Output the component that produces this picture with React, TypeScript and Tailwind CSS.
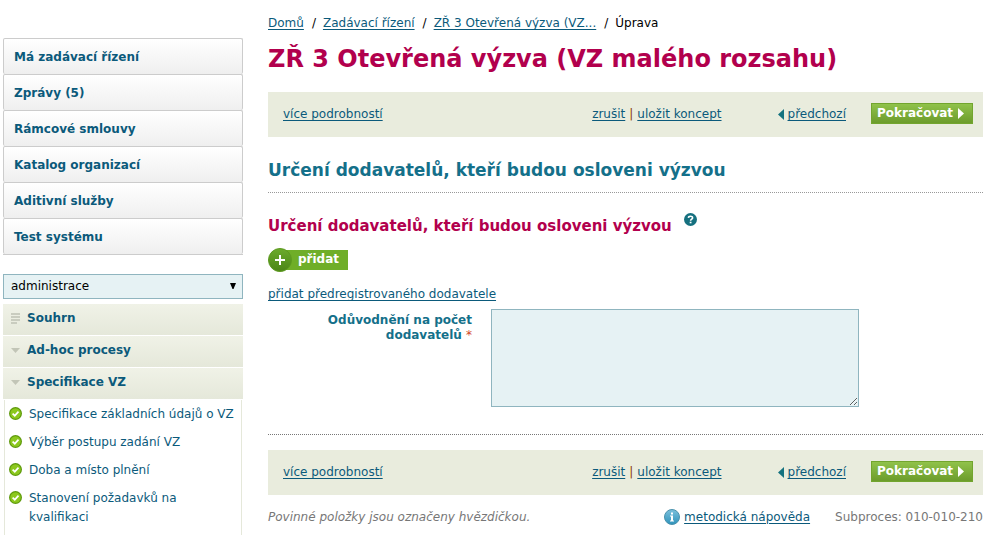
import type { ReactNode } from 'react';

interface LinkProps {
  children: ReactNode;
}

const MAIN_MENU = [
  'Má zadávací řízení',
  'Zprávy (5)',
  'Rámcové smlouvy',
  'Katalog organizací',
  'Aditivní služby',
  'Test systému',
];

const STEPS = [
  'Specifikace základních údajů o VZ',
  'Výběr postupu zadání VZ',
  'Doba a místo plnění',
  'Stanovení požadavků na kvalifikaci',
];

const CRUMBS = ['Domů', 'Zadávací řízení', 'ZŘ 3 Otevřená výzva (VZ...'];

function TextLink({ children }: LinkProps) {
  return (
    <a href="#" className="text-[#0b5a7b] underline underline-offset-2">
      {children}
    </a>
  );
}

function LinesIcon() {
  return (
    <svg width="9" height="11" viewBox="0 0 9 11" fill="#c9ccbf" shapeRendering="crispEdges" aria-hidden>
      <path d="M0 0h9v2H0zM0 3h9v2H0zM0 6h9v2H0zM0 9h6v2H0z" />
    </svg>
  );
}

function DownIcon() {
  return (
    <svg width="9" height="5" viewBox="0 0 9 5" aria-hidden>
      <path d="M0 0h9L4.500 5z" fill="#c2c5b7" />
    </svg>
  );
}

function CheckIcon() {
  return (
    <svg width="13" height="13" viewBox="0 0 13 13" className="mt-0.5 shrink-0" aria-hidden>
      <circle cx="6.500" cy="6.500" r="6.500" fill="#5f9a0c" />
      <circle cx="6.500" cy="6.500" r="5.200" fill="#8cc81e" />
      <path d="M3.600 6.600l2.200 2.100 3.700-4" fill="none" stroke="#fff" strokeWidth="1.700" />
    </svg>
  );
}

function HelpIcon() {
  return (
    <svg width="13" height="13" viewBox="0 0 13 13" aria-hidden>
      <circle cx="6.500" cy="6.500" r="6.500" fill="#15707f" />
      <path
        d="M4.400 4.900C4.500 2.700 8.700 2.700 8.600 4.900C8.500 6.200 6.600 6 6.600 7.700"
        fill="none"
        stroke="#fff"
        strokeWidth="1.600"
      />
      <path d="M5.700 8.700h1.800v1.600H5.700z" fill="#fff" />
    </svg>
  );
}

function InfoIcon() {
  return (
    <svg width="16" height="16" viewBox="0 0 16 16" aria-hidden>
      <defs>
        <linearGradient id="info" x1="0" y1="0" x2="0" y2="1">
          <stop offset="0" stopColor="#7cc0dc" />
          <stop offset="1" stopColor="#2f93bb" />
        </linearGradient>
      </defs>
      <circle cx="8" cy="8" r="7.500" fill="url(#info)" stroke="#4b92ad" />
      <path d="M7 3.500h2v2H7zM6 6.500h3v5h1v1H6v-1h1v-4H6z" fill="#fff" />
    </svg>
  );
}

function PlusIcon() {
  return (
    <svg width="24" height="24" viewBox="0 0 24 24" className="z-10 shrink-0" aria-hidden>
      <defs>
        <linearGradient id="plus" x1="0" y1="0" x2="0" y2="1">
          <stop offset="0" stopColor="#6cab2c" />
          <stop offset="1" stopColor="#4b8516" />
        </linearGradient>
      </defs>
      <circle cx="12" cy="12" r="11.500" fill="url(#plus)" stroke="#5d9a20" />
      <path d="M11 7h2v4h4v2h-4v4h-2v-4H7v-2h4z" fill="#fff" />
    </svg>
  );
}

function Sidebar() {
  return (
    <aside className="flex w-60 shrink-0 flex-col pt-[38px]">
      <nav aria-label="Hlavní menu">
        <ul className="border-b border-[#cccccc]">
          {MAIN_MENU.map((label) => (
            <li key={label}>
              <a
                href="#"
                className="flex h-9 items-center rounded-xs border border-b-0 border-[#cccccc] bg-linear-to-b from-white to-[#efefef] px-2.5 pt-0.5 font-bold text-[#0b5a7b]"
              >
                {label}
              </a>
            </li>
          ))}
        </ul>
      </nav>

      <div className="relative mt-[19px]">
        <select
          aria-label="Role"
          className="h-[25px] w-full appearance-none border border-[#8fb5bf] bg-[#e6f2f4] px-[7px] text-black"
        >
          <option>administrace</option>
        </select>
        <svg width="6" height="6" viewBox="0 0 6 6" className="pointer-events-none absolute top-[9px] right-[7px]" aria-hidden>
          <path d="M0 0h6L3.500 6h-1z" />
        </svg>
      </div>

      <nav aria-label="Průvodce" className="mt-[5px] flex flex-1 flex-col">
        <ul className="flex flex-col gap-px">
          {['Souhrn', 'Ad-hoc procesy', 'Specifikace VZ'].map((label, i) => (
            <li key={label}>
              <a
                href="#"
                className="flex h-[31px] items-center gap-[7px] bg-linear-to-b from-[#f0f2e7] to-[#e5e8da] px-2 pb-0.5 font-bold text-[#0b5a7b]"
              >
                {i === 0 ? <LinesIcon /> : <DownIcon />}
                {label}
              </a>
            </li>
          ))}
        </ul>
        <ul className="mx-px mt-px flex flex-1 flex-col gap-[9px] border-x border-[#e5e8da] pt-[5px] pr-1 pl-1">
          {STEPS.map((label) => (
            <li key={label}>
              <a href="#" className="flex gap-[7px] leading-[19px] text-[#0b5a7b]">
                <CheckIcon />
                {label}
              </a>
            </li>
          ))}
        </ul>
      </nav>
    </aside>
  );
}

function ActionBar() {
  return (
    <div className="flex h-[45px] items-center bg-[#e9ecdd] pr-2.5 pb-0.5 pl-[15px]">
      <div className="pt-0.5">
        <TextLink>více podrobností</TextLink>
      </div>
      <div className="ml-auto flex gap-1 pt-0.5">
        <TextLink>zrušit</TextLink>
        <span className="text-[#8a3a00]">|</span>
        <TextLink>uložit koncept</TextLink>
      </div>
      <div className="ml-14 flex items-center gap-1 pt-0.5">
        <svg width="6" height="11" viewBox="0 0 6 11" aria-hidden>
          <path d="M6 0v11L0 5.500z" fill="#14727f" />
        </svg>
        <TextLink>předchozí</TextLink>
      </div>
      <button
        type="button"
        className="ml-[25px] flex h-[21px] w-[102px] items-center gap-[5px] border border-[#72a52e] bg-linear-to-b from-[#90c24a] to-[#6c9c2b] pl-[5px] font-bold text-white"
      >
        Pokračovat
        <svg width="6" height="11" viewBox="0 0 6 11" className="shrink-0" aria-hidden>
          <path d="M0 0v11l6-5.500z" fill="#fff" />
        </svg>
      </button>
    </div>
  );
}

export default function App() {
  return (
    <div className="flex min-h-screen bg-white pr-[9px] pl-[3px] font-['DejaVu_Sans',sans-serif] text-[12px] leading-[15px]">
      <Sidebar />
      <main className="ml-[25px] min-w-0 flex-1 pt-4">
        <nav aria-label="Drobečková navigace">
          <ol className="flex gap-[7px]">
            {CRUMBS.map((label) => (
              <li key={label} className="flex gap-2">
                <TextLink>{label}</TextLink>
                <span>/</span>
              </li>
            ))}
            <li>Úprava</li>
          </ol>
        </nav>

        <h1 className="mt-3 mb-[17px] text-[24px] leading-8 font-bold text-[#b2004d]">
          ZŘ 3 Otevřená výzva (VZ malého rozsahu)
        </h1>

        <ActionBar />

        <h2 className="mt-[23px] border-b border-dotted border-[#999999] pb-3 text-[17px] leading-5 font-bold text-[#14708a]">
          Určení dodavatelů, kteří budou osloveni výzvou
        </h2>

        <div className="mt-5 flex gap-3">
          <h3 className="pt-[3px] text-[15px] leading-5 font-bold text-[#b2004d]">
            Určení dodavatelů, kteří budou osloveni výzvou
          </h3>
          <a href="#" aria-label="Nápověda">
            <HelpIcon />
          </a>
        </div>

        <button type="button" className="mt-3 flex h-6 items-center font-bold text-white">
          <PlusIcon />
          <span className="-ml-3 h-5 bg-[#6fae28] pt-0.5 pr-[9px] pl-[18px]">přidat</span>
        </button>

        <div className="mt-[15px]">
          <TextLink>přidat předregistrovaného dodavatele</TextLink>
        </div>

        <div className="mt-[7px] flex gap-[19px] border-b border-dotted border-[#777777] pb-[27px]">
          <label htmlFor="reason" className="w-51 pt-1 pl-10 text-right font-bold text-[#14708a]">
            Odůvodnění na počet dodavatelů <span className="font-normal text-[#d2451e]">*</span>
          </label>
          <textarea id="reason" className="h-[98px] w-92 border border-[#8fb5bf] bg-[#e6f2f4]" />
        </div>

        <div className="mt-[15px]">
          <ActionBar />
        </div>

        <footer className="mt-3.5 flex items-center text-[#777777]">
          <em>Povinné položky jsou označeny hvězdičkou.</em>
          <div className="ml-auto flex items-center gap-1">
            <InfoIcon />
            <TextLink>metodická nápověda</TextLink>
          </div>
          <span className="ml-[25px]">Subproces: 010-010-210</span>
        </footer>
      </main>
    </div>
  );
}
